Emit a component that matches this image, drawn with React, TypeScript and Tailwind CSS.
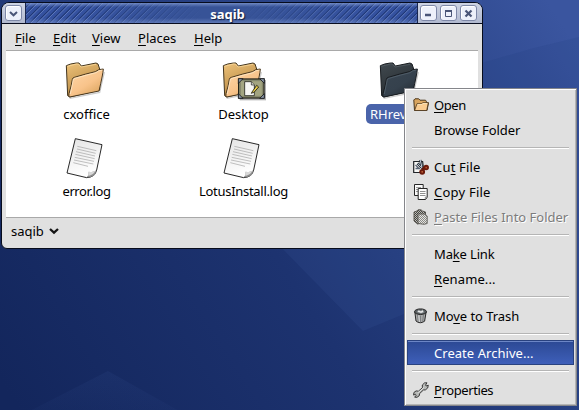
import React from "react";

function Wallpaper() {
  return (
    <svg className="absolute inset-0" width="579" height="410" viewBox="0 0 579 410">
      <defs>
        <linearGradient id="sky" x1="0" y1="380" x2="560" y2="20" gradientUnits="userSpaceOnUse">
          <stop offset="0" stopColor="#13265c" />
          <stop offset="0.45" stopColor="#1d3370" />
          <stop offset="0.75" stopColor="#294386" />
          <stop offset="1" stopColor="#3a559f" />
        </linearGradient>
        <linearGradient id="facet" x1="0" y1="0" x2="0" y2="1">
          <stop offset="0" stopColor="#4867ad" stopOpacity="0.1" />
          <stop offset="1" stopColor="#4867ad" stopOpacity="0" />
        </linearGradient>
      </defs>
      <rect width="579" height="410" fill="url(#sky)" />
      <path d="M0 0H482V60L0 30Z" fill="#3b57a2" opacity=".25" />
      <path d="M482 63 530 49 579 37V160H482Z" fill="#1f3777" opacity=".14" />
      <path d="M274 240 363 331 450 295V240Z" fill="#3d5ba0" opacity=".16" />
      <path d="M0 432 20 416 108 371 197 421 180 440H0Z" fill="url(#facet)" />
    </svg>
  );
}

function Folder({ dark = false, emblem = false }: { dark?: boolean; emblem?: boolean }) {
  const id = dark ? "dark" : "tan";
  return (
    <svg width="40" height="36" viewBox="48 36 120 108" overflow="visible">
      <defs>
        <linearGradient id={id + "b"} x1="0" y1="0" x2="0.4" y2="1">
          <stop offset="0" stopColor={dark ? "#414a50" : "#edc27a"} />
          <stop offset="1" stopColor={dark ? "#272c30" : "#b4853f"} />
        </linearGradient>
        <linearGradient id={id + "f"} x1="0" y1="0" x2="0.8" y2="1">
          <stop offset="0" stopColor={dark ? "#394550" : "#ffd9ab"} />
          <stop offset="0.6" stopColor={dark ? "#35414d" : "#f8c38a"} />
          <stop offset="1" stopColor={dark ? "#252c33" : "#d9a35c"} />
        </linearGradient>
      </defs>
      <path d="M62 145 152 127 166 66" fill="none" stroke="#000" strokeOpacity=".2" strokeWidth="4" />
      <path d="M52 47 65 42 82 39 90 39 97 48 141 39 147 42 152 57 152 120 62 141 56 137Z" fill={`url(#${id}b)`} stroke={dark ? "#181c20" : "#42351f"} strokeWidth="3" strokeLinejoin="round" />
      <path d="M55 49 82 42 88 42 96 51 141 43" fill="none" stroke={dark ? "#5a646a" : "#ffe1a6"} strokeWidth="2" />
      <path d="M76 82Q112 71 139 65Q148 57 163 57Q162 72 150 123L62 141Q58 140 60 131Q68 105 70 88Q71 83 76 82Z" fill={`url(#${id}f)`} stroke={dark ? "#181c20" : "#49381f"} strokeWidth="3" strokeLinejoin="round" />
      <path d="M64 132 73 88 78 85Q116 74 141 68Q148 61 160 60" fill="none" stroke={dark ? "#5b6873" : "#fff0d3"} strokeWidth="2" />
      {emblem && (
        <g>
          <rect x="101" y="90" width="79" height="61" fill="#000" opacity=".3" />
          <rect x="98" y="87" width="76" height="57" fill="#a3a581" stroke="#15160f" strokeWidth="3.5" />
          <rect x="103" y="92" width="66" height="47" fill="none" stroke="#80836a" strokeWidth="3" />
          <path d="M97 86h14L97 100ZM175 86h-14l14 14ZM97 145h14L97 131ZM175 145h-14l14-14Z" fill="#8793a5" stroke="#17191c" strokeWidth="2.5" />
          <path d="M116 95h20l9 10v32h-29Z" fill="#f6f6f3" stroke="#24251f" strokeWidth="2.5" />
          <path d="M136 95v10h9" fill="#c9c9c5" stroke="#24251f" strokeWidth="2" />
          <path d="M138 126 152 106 158 111 145 126 136 130Z" fill="#ecd04a" stroke="#191910" strokeWidth="2.5" />
        </g>
      )}
    </svg>
  );
}

function Doc() {
  return (
    <svg width="40" height="42" viewBox="80 20 120 126">
      <defs>
        <linearGradient id="paper" x1="0" y1="0" x2="0.3" y2="1">
          <stop offset="0" stopColor="#e4e4e4" />
          <stop offset="1" stopColor="#ffffff" />
        </linearGradient>
      </defs>
      <path d="M111 25 191 43 175 119Q170 141 145 142L86 128Z" fill="url(#paper)" stroke="#181818" strokeWidth="2.8" strokeLinejoin="round" />
      <path d="M145 141Q153 132 151 124Q164 128 174 120L170 133Q161 141 145 141Z" fill="#8c8c8c" />
      <path d="M151 124Q163 128 174 120L164 131Q156 136 150 137Z" fill="#d8d8d8" />
      <path d="M117 48 174 61M116 56 172 69M113 64 170 77M111 72 169 85M109 81 167 93M107 89 165 101M105 97 149 108" fill="none" stroke="#999" strokeWidth="1.8" />
    </svg>
  );
}

const menuIcons: Record<string, React.ReactNode> = {
  open: (
    <>
      <path d="M.8 3 2 1.8h3.7L7 3.2h5.5l.8 1v1.6h2.2L14 13.5H1.5Z" fill="#d9a55f" stroke="#49351c" />
      <path d="M1.7 13.2 4 6.7h4.6l1-1h5.7L13.7 13.5H1.7Z" fill="#f9cc91" stroke="#49351c" strokeWidth=".8" />
      <path d="M4.5 7.5H9l1-1h4.3" stroke="#fff0cf" strokeWidth=".7" fill="none" />
    </>
  ),
  cut: (
    <>
      <path d="M.7 2.5H9.6L11 13.5H.7Z" fill="#f6f6f4" stroke="#202428" strokeWidth="1.2" />
      <path d="M2.5 6 6 9.5M2.5 9.5H7" stroke="#596474" strokeWidth="1.3" />
      <path d="M4.5 4.3 11 11M7.2.9 9.3 10" stroke="#202832" strokeWidth="2.4" />
      <path d="M4.5 4.3 11 11M7.2.9 9.3 10" stroke="#c7d3df" strokeWidth="1" />
      <path d="M9.2 10.2 13.2 8" stroke="#5f170b" strokeWidth="3" />
      <circle cx="13.2" cy="8.6" r="1.8" fill="#b8552f" stroke="#6b1a0b" strokeWidth="1.9" />
      <circle cx="9.2" cy="12.8" r="1.9" fill="#c4653a" stroke="#6b1a0b" strokeWidth="2" />
    </>
  ),
  copy: (
    <>
      <path d="M1.5.5h8.7v11H1.5Z" fill="#fafafa" stroke="#262626" />
      <path d="M3 3.5h5M3 5.5h2M3 7.5h2" stroke="#999" />
      <path d="M5.2 4.5h9v8.7L12.5 15.5H5.2Z" fill="#fff" stroke="#262626" />
      <path d="M7 7.5h5.5M7 9.5h5.5M7 11.5h5.5M12.3 15v-2h2" stroke="#858585" strokeWidth=".9" fill="none" />
    </>
  ),
  paste: (
    <>
      <defs>
        <pattern id="dither" width="2" height="2" patternUnits="userSpaceOnUse">
          <rect width="2" height="2" fill="#bdbcb8" />
          <path d="M0 0h1v1H0ZM1 1h1v1H1Z" fill="#45443f" />
        </pattern>
        <pattern id="ditherLight" width="2" height="2" patternUnits="userSpaceOnUse">
          <rect width="2" height="2" fill="#e4e4e2" />
          <path d="M0 0h1v1H0ZM1 1h1v1H1Z" fill="#8a8984" />
        </pattern>
      </defs>
      <path d="M1 3 4 2 5 .8h3L9.5 2l3 1v10L4.5 15 1 12Z" fill="url(#dither)" stroke="#504e48" strokeWidth=".9" />
      <path d="M5 5h7l2.2 2v7.5L11 15.3 5 14.5Z" fill="url(#ditherLight)" stroke="#5c5a56" strokeWidth=".9" />
    </>
  ),
  trash: (
    <>
      <path d="M1.8 3.7 3 13Q7 16.4 11.6 13.2L13.2 3.7Z" fill="#a9aaaa" stroke="#282828" />
      <path d="M4.5 7 5.3 14M7.4 7.5v7M10.4 7 9.7 14" stroke="#6c7072" strokeWidth=".8" />
      <path d="M5.8 7.4 6.4 14" stroke="#e5e5e5" strokeWidth=".8" />
      <ellipse cx="7.5" cy="3.7" rx="6" ry="2.8" fill="#5b6062" stroke="#282828" />
      <path d="m4 4 1.6-2L8 3l1.6-1.2L11 4.3 8 5.3Z" fill="#e7e8e8" stroke="#70777b" strokeWidth=".5" />
    </>
  ),
  wrench: (
    <>
      <path d="M9.4 5.8 9.3 3 11.5.9 14 .8 12.6 3 13.2 4 15.3 3.2 14.7 6 12.4 7.9 10.4 8 6.6 11.6 6.2 13.8 4 15.3 1.7 15.2 3.2 13.2 2.4 12.3.6 13.1.9 10.5 3.1 8.9 5.4 9.2Z" fill="#b8bab8" stroke="#292929" strokeWidth=".9" strokeLinejoin="round" />
      <path d="M4.8 10.8 11 5.3" stroke="#eee" strokeWidth=".8" />
    </>
  ),
};

function MenuIcon({ name }: { name?: string }) {
  return (
    <span className="flex h-4 w-[21px] shrink-0">
      {name && <svg width="16" height="16" viewBox="0 0 16 16" fill="none">{menuIcons[name]}</svg>}
    </span>
  );
}

// Label with an underlined mnemonic letter at index `k`.
function Mnemonic({ text, k = -1 }: { text: string; k?: number }) {
  if (k < 0) return <>{text}</>;
  return (
    <>
      {text.slice(0, k)}
      <span className="underline decoration-1 underline-offset-2">{text[k]}</span>
      {text.slice(k + 1)}
    </>
  );
}

type Item = { text: string; k?: number; icon?: string; off?: boolean; hot?: boolean; cls?: string };

const groups: Item[][] = [
  [
    { text: "Open", k: 0, icon: "open", cls: "tracking-[-0.4px]" },
    { text: "Browse Folder", cls: "tracking-[-0.05px]" },
  ],
  [
    { text: "Cut File", k: 2, icon: "cut", cls: "tracking-[0.18px]" },
    { text: "Copy File", k: 0, icon: "copy", cls: "tracking-[0.22px]" },
    { text: "Paste Files Into Folder", k: 0, icon: "paste", off: true },
  ],
  [
    { text: "Make Link", k: 2, cls: "tracking-[-0.15px]" },
    { text: "Rename...", k: 0, cls: "tracking-[0.1px]" },
  ],
  [{ text: "Move to Trash", k: 2, icon: "trash", cls: "tracking-[-0.05px]" }],
  [{ text: "Create Archive...", hot: true, cls: "tracking-[0.04px]" }],
  [{ text: "Properties", k: 0, icon: "wrench", cls: "tracking-[-0.4px]" }],
];

function ContextMenu() {
  return (
    <div className="absolute left-[404px] top-[88px] h-[318px] w-[173px] border border-[#85868b] bg-[#e0e0e0] px-[2px] py-[3px] shadow-[inset_1px_1px_0_#fff,inset_-1px_-1px_0_#b5b5b5]">
      {groups.map((group, g) => (
        <React.Fragment key={g}>
          {g > 0 && (
            <div className="flex h-3 items-center px-[5px]">
              <div className="h-[2px] w-full border-t border-[#b5b5b5] bg-white" />
            </div>
          )}
          {group.map((it) => (
            <div
              key={it.text}
              className={
                "flex h-[25px] items-center whitespace-nowrap pl-[6px] " +
                (it.hot
                  ? "bg-linear-to-b from-[#2b4892] to-[#3f60bb] text-white shadow-[inset_0_0_0_1px_#29427f,inset_1px_2px_0_#6c86c6]"
                  : it.off
                    ? "text-[#7c7c7c] [text-shadow:1px_1px_0_#fff]"
                    : "text-black")
              }
            >
              <MenuIcon name={it.icon} />
              <span className={"pt-[2px] " + (it.cls ?? "")}><Mnemonic text={it.text} k={it.k} /></span>
            </div>
          ))}
        </React.Fragment>
      ))}
    </div>
  );
}

function WinButton({ children }: { children: React.ReactNode }) {
  return (
    <div className="flex h-4 w-[17px] items-center justify-center rounded-[3px] border border-[#7d87a7] bg-[#edf0fa] shadow-[inset_1px_1px_0_#fff]">
      <svg width="9" height="9" viewBox="0 0 9 9" fill="none" stroke="#4a5577">{children}</svg>
    </div>
  );
}

function TitleBar() {
  return (
    <div className="flex h-[21px] border-b border-[#080d20]">
      <div className="flex w-6 items-center justify-center border-r border-[#19264f] bg-linear-to-b from-[#cdd3e3] to-[#b1b9cf]">
        <WinButton><path d="m1 3 3.5 3.3L8 3" strokeWidth="2" /></WinButton>
      </div>
      <div className="flex flex-1 items-center justify-center bg-[linear-gradient(180deg,#8ba3d8aa_0px,#8ba3d800_4px,#8ba3d800_15px,#8ba3d877_20px),linear-gradient(90deg,#37539700_12%,#375397_45%,#375397_55%,#37539700_88%),repeating-linear-gradient(135deg,#34519f_0px,#34519f_2px,#1f3776_2.7px,#1f3776_3.1px,#5f7abf_3.8px,#34519f_4.6px)] pl-[12px] pt-[2px] text-[13px] font-bold leading-none text-white [text-shadow:1px_1px_1px_#111c3c]">
        <span>saqib</span>
      </div>
      <div className="flex w-[65px] items-center gap-[3px] border-l border-[#19264f] bg-linear-to-b from-[#cdd3e3] to-[#b1b9cf] pl-[2px]">
        <WinButton><path d="M1 6h6" strokeWidth="2.6" /></WinButton>
        <WinButton><path d="M1.5 2.5h6v5h-6Z" /><path d="M1 2h7" strokeWidth="2" /></WinButton>
        <WinButton><path d="m1.5 1.5 6 6m0-6-6 6" strokeWidth="2.2" /></WinButton>
      </div>
    </div>
  );
}

type FileProps = { icon: React.ReactNode; label: string; selected?: boolean; cls?: string };

function FileItem({ icon, label, selected = false, cls = "" }: FileProps) {
  return (
    <div className="flex flex-col items-center justify-between">
      <div className="mr-[3px]">{icon}</div>
      <span className={"h-5 px-1 leading-[20px] " + (selected ? "mr-[4px] rounded-[5px] bg-[#4a64aa] text-white " : "") + cls}>{label}</span>
    </div>
  );
}

export default function App() {
  return (
    <div className="relative h-[410px] w-[579px] overflow-hidden font-['Noto_Sans',sans-serif] text-[13px] leading-none text-black">
      <Wallpaper />
      <div className="absolute left-[1px] top-[2px] flex h-[247px] w-[482px] flex-col overflow-hidden rounded-b-[6px] rounded-t-[8px] border border-[#070c1c] bg-[#e0e0e0]">
        <TitleBar />
        <div className="flex h-[26px] items-center pl-[13px] pt-[2px]">
          <span className="w-[38px]"><Mnemonic text="File" k={0} /></span>
          <span className="w-[39px]"><Mnemonic text="Edit" k={0} /></span>
          <span className="w-[46px]"><Mnemonic text="View" k={0} /></span>
          <span className="w-[56px]"><Mnemonic text="Places" k={0} /></span>
          <span><Mnemonic text="Help" k={0} /></span>
        </div>
        <div className="mx-1 grid h-[168px] grid-cols-[157px_157px_157px] grid-rows-[62px_64px] gap-y-[13px] border-y border-[#a9a9a9] bg-white pl-[2px] pt-[11px]">
          <FileItem icon={<Folder />} label="cxoffice" />
          <FileItem icon={<Folder emblem />} label="Desktop" />
          <FileItem icon={<Folder dark />} label="RHreview" selected />
          <FileItem icon={<Doc />} label="error.log" cls="tracking-[-0.4px]" />
          <FileItem icon={<Doc />} label="LotusInstall.log" cls="tracking-[-0.3px]" />
        </div>
        <div className="flex flex-1 items-center gap-[5px] pb-[4px] pl-[9px]">
          <span>saqib</span>
          <svg width="10" height="8" viewBox="0 0 10 8" fill="none"><path d="m1 2 4 3.6L9 2" stroke="#151515" strokeWidth="2.3" /></svg>
        </div>
      </div>
      <ContextMenu />
    </div>
  );
}
